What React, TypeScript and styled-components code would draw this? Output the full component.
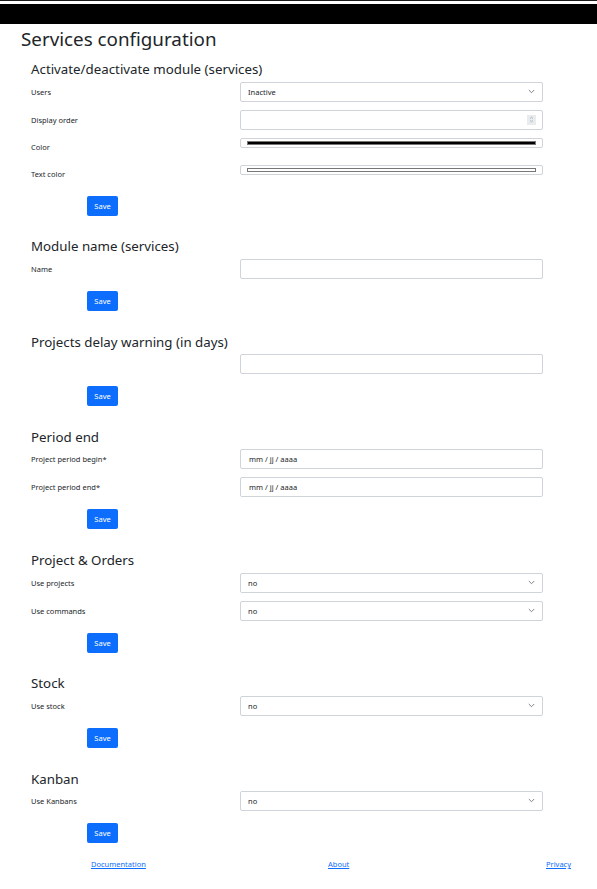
import React from 'react'
import styled, { createGlobalStyle } from 'styled-components'

const GlobalStyle = createGlobalStyle`
  body {
    margin: 0;
    background: #fff;
    font-family: "Noto Sans", "Open Sans", sans-serif;
    color: #212529;
  }
  * { box-sizing: border-box; }
`

const TopLine = styled.div`
  height: 1px;
  background: #1c1c1c;
  margin-bottom: 3px;
`

const NavBar = styled.div`
  height: 20px;
  background: #000;
`

const Page = styled.main`
  padding: 3px 54px 0 21px;
`

const Title = styled.h1`
  margin: 0;
  font-size: 18.8px;
  font-weight: 400;
  line-height: 24px;
`

const Section = styled.section`
  padding-left: 10px;
  margin-top: ${(props) => (props.$first ? '9px' : '21.8px')};
`

const SectionTitle = styled.h4`
  margin: 0 0 3.5px;
  font-size: 13.3px;
  font-weight: 400;
  line-height: 18px;
`

const Row = styled.div`
  display: flex;
  align-items: center;
  min-height: ${(props) => (props.$short ? '19px' : '20px')};
  margin-bottom: 8px;
`

const Label = styled.label`
  width: 209px;
  flex-shrink: 0;
  font-size: 7.5px;
  line-height: 12px;
`

const Field = styled.div`
  position: relative;
  flex: 1;
  align-self: ${(props) => (props.$top ? 'flex-start' : 'auto')};
`

const TextInput = styled.input`
  display: block;
  width: 100%;
  height: 20px;
  padding: 0 8px;
  border: 1px solid #ced4da;
  border-radius: 2px;
  font-family: inherit;
  font-size: 7.5px;
  color: #212529;
  background: #fff;
  outline: none;
  &::placeholder { color: #212529; }
`

const Select = styled.select`
  display: block;
  width: 100%;
  height: 20px;
  padding: 0 7px;
  border: 1px solid #ced4da;
  border-radius: 2px;
  font-family: inherit;
  font-size: 7.5px;
  color: #212529;
  background: #fff;
  appearance: none;
  outline: none;
`

const Chevron = styled.svg`
  position: absolute;
  right: 8px;
  top: 7px;
  width: 7px;
  height: 5px;
  pointer-events: none;
`

const Spinner = styled.span`
  position: absolute;
  right: 7px;
  top: 5px;
  width: 9px;
  height: 10px;
  background: #e9ecef;
  display: flex;
  align-items: center;
  justify-content: center;
`

const ColorBox = styled.div`
  height: 10px;
  border: 1px solid #ced4da;
  border-radius: 2px;
  padding: 2px 6px;
  background: #fff;
`

const Swatch = styled.div`
  height: 4px;
  border: 1px solid #777;
  background: ${(props) => props.$color};
`

const SaveButton = styled.button`
  display: block;
  margin: 12px 0 0 56px;
  width: 31px;
  height: 20px;
  padding: 0;
  border: none;
  border-radius: 2px;
  background: #0d6efd;
  color: #fff;
  font-family: inherit;
  font-size: 7.5px;
  cursor: pointer;
`

const Footer = styled.footer`
  display: grid;
  grid-template-columns: 237px 218px auto;
  padding: 7px 0 0 91px;
  height: 45px;
`

const FooterLink = styled.a`
  font-size: 7.5px;
  color: #0d6efd;
  text-decoration: underline;
`

const ChevronIcon = () => (
  <Chevron viewBox="0 0 7 5">
    <path d="M0.8 1 L3.5 3.7 L6.2 1" fill="none" stroke="#6c757d" strokeWidth="0.9" />
  </Chevron>
)

const SelectField = ({ value }) => (
  <Field>
    <Select defaultValue={value}>
      <option>{value}</option>
    </Select>
    <ChevronIcon />
  </Field>
)

const ColorField = ({ color }) => (
  <Field $top>
    <ColorBox>
      <Swatch $color={color} />
    </ColorBox>
  </Field>
)

const Save = () => <SaveButton type="button">Save</SaveButton>

const App = () => {
  return (
    <>
      <GlobalStyle />
      <TopLine />
      <NavBar />
      <Page>
        <Title>Services configuration</Title>

        <Section $first>
          <SectionTitle>Activate/deactivate module (services)</SectionTitle>
          <Row>
            <Label>Users</Label>
            <SelectField value="Inactive" />
          </Row>
          <Row>
            <Label>Display order</Label>
            <Field>
              <TextInput type="text" />
              <Spinner>
                <svg width="5" height="7" viewBox="0 0 5 7">
                  <path d="M1 2.6 L2.5 1.2 L4 2.6 M1 4.4 L2.5 5.8 L4 4.4" fill="none" stroke="#999" strokeWidth="0.7" />
                </svg>
              </Spinner>
            </Field>
          </Row>
          <Row $short>
            <Label>Color</Label>
            <ColorField color="#000" />
          </Row>
          <Row $short>
            <Label>Text color</Label>
            <ColorField color="#fff" />
          </Row>
          <Save />
        </Section>

        <Section>
          <SectionTitle>Module name (services)</SectionTitle>
          <Row>
            <Label>Name</Label>
            <Field>
              <TextInput type="text" />
            </Field>
          </Row>
          <Save />
        </Section>

        <Section>
          <SectionTitle>Projects delay warning (in days)</SectionTitle>
          <Row>
            <Label />
            <Field>
              <TextInput type="text" />
            </Field>
          </Row>
          <Save />
        </Section>

        <Section>
          <SectionTitle>Period end</SectionTitle>
          <Row>
            <Label>Project period begin*</Label>
            <Field>
              <TextInput type="text" placeholder="mm / jj / aaaa" />
            </Field>
          </Row>
          <Row>
            <Label>Project period end*</Label>
            <Field>
              <TextInput type="text" placeholder="mm / jj / aaaa" />
            </Field>
          </Row>
          <Save />
        </Section>

        <Section>
          <SectionTitle>Project &amp; Orders</SectionTitle>
          <Row>
            <Label>Use projects</Label>
            <SelectField value="no" />
          </Row>
          <Row>
            <Label>Use commands</Label>
            <SelectField value="no" />
          </Row>
          <Save />
        </Section>

        <Section>
          <SectionTitle>Stock</SectionTitle>
          <Row>
            <Label>Use stock</Label>
            <SelectField value="no" />
          </Row>
          <Save />
        </Section>

        <Section>
          <SectionTitle>Kanban</SectionTitle>
          <Row>
            <Label>Use Kanbans</Label>
            <SelectField value="no" />
          </Row>
          <Save />
        </Section>
      </Page>
      <Footer>
        <div><FooterLink href="#">Documentation</FooterLink></div>
        <div><FooterLink href="#">About</FooterLink></div>
        <div><FooterLink href="#">Privacy</FooterLink></div>
      </Footer>
    </>
  )
}

export default App
